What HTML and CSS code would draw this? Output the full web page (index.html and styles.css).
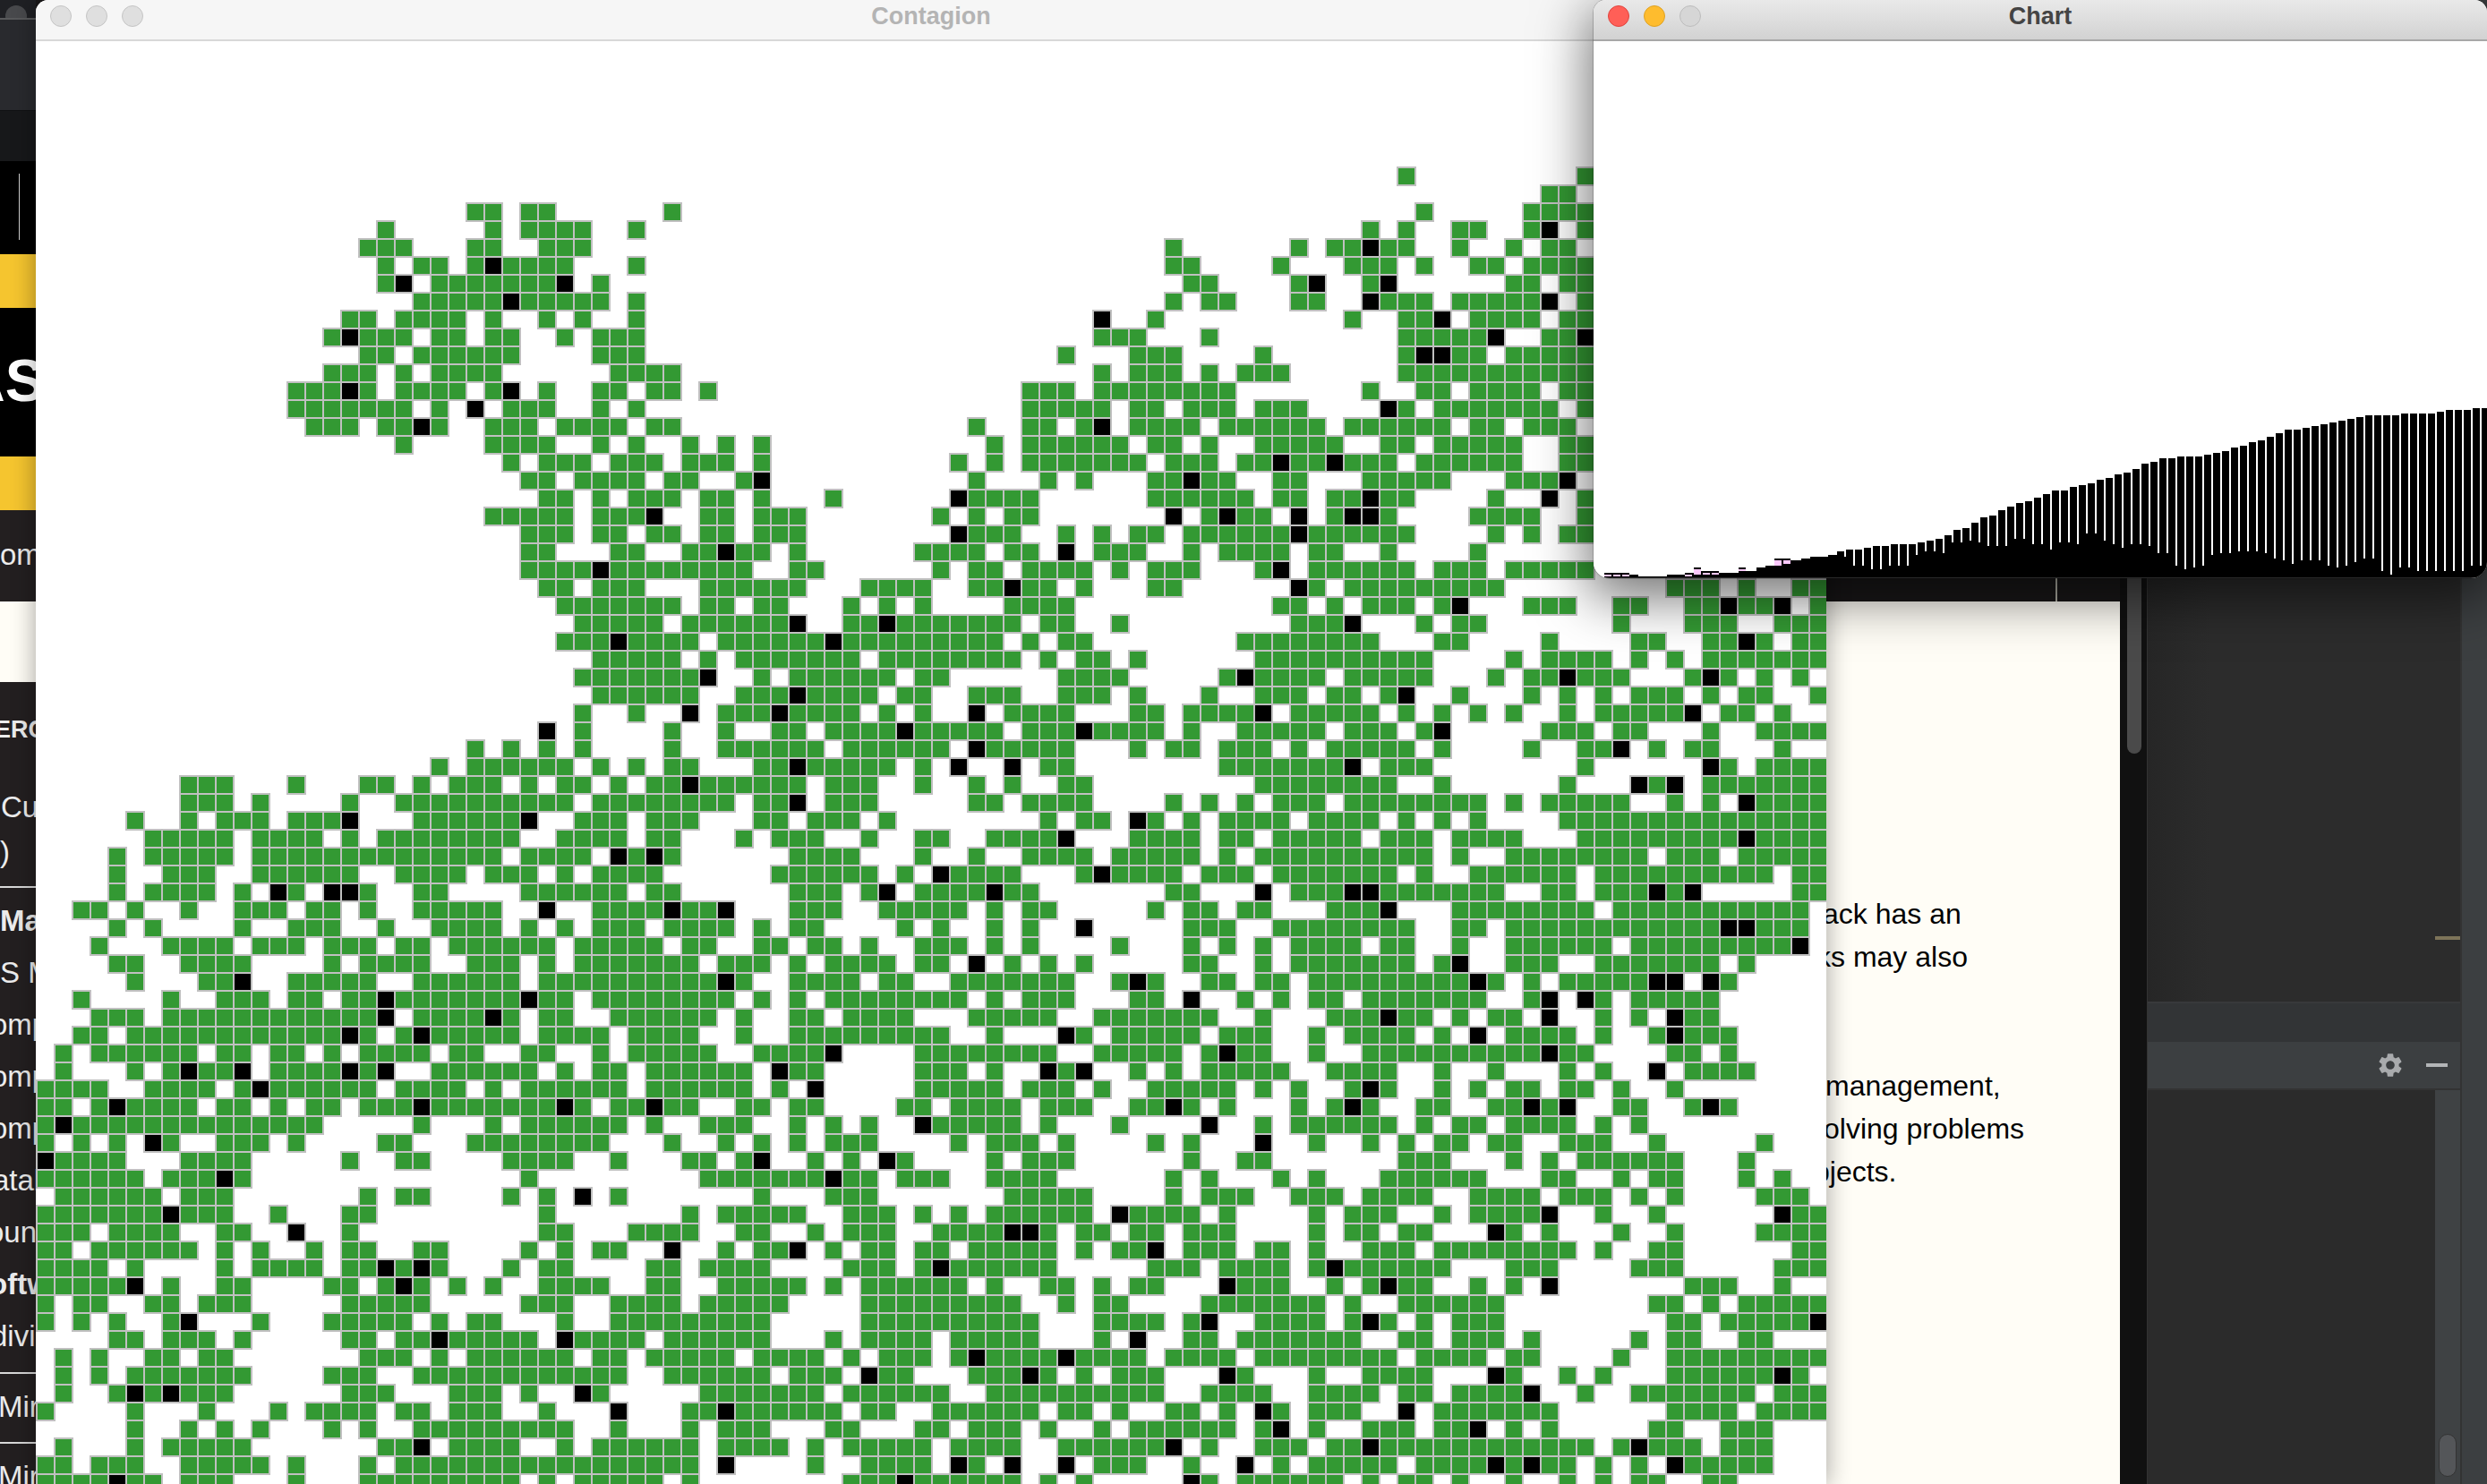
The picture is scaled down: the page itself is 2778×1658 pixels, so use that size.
FILE: index.html
```html
<!DOCTYPE html>
<html lang="en">
<head>
<meta charset="utf-8">
<title>Contagion</title>
<link rel="stylesheet" href="styles.css">
</head>
<body>
<div class="desktop">
  <aside class="strip">
    <div class="s-account"><span class="avatar"></span></div>
    <div class="s-nav"></div>
    <div class="s-sub"></div>
    <div class="s-black"><span class="vbar"></span></div>
    <div class="s-yellow"></div>
    <div class="s-hero"><span class="hero-text">AS</span></div>
    <div class="s-yellow"></div>
    <div class="s-lead"><span class="item">om</span></div>
    <div class="s-cream"></div>
    <div class="s-list">
      <div class="s-heading">ERC</div>
      <div class="s-para">
        <div class="para-line para-c">Cu</div>
        <div class="para-line">)</div>
      </div>
      <hr class="s-rule s-rule-a">
      <div class="s-items">
        <div class="item strong">Ma</div>
        <div class="item">S M</div>
        <div class="item clip-10">omp</div>
        <div class="item clip-10">omp</div>
        <div class="item clip-10">omp</div>
        <div class="item clip-8">atal</div>
        <div class="item clip-14">oun</div>
        <div class="item strong clip-12">oftw</div>
        <div class="item clip-10">divi</div>
      </div>
      <hr class="s-rule s-rule-b">
      <div class="item item-m">Mir</div>
      <hr class="s-rule s-rule-c">
      <div class="item item-m">Mir</div>
    </div>
  </aside>

  <main class="page">
    <div class="band"><span class="band-tick"></span></div>
    <div class="cream">
      <div class="note">
        <p class="line l1">ack has an</p>
        <p class="line l2">ks may also</p>
        <p class="line l3 para-gap">management,</p>
        <p class="line l4">olving problems</p>
        <p class="line l5">bjects.</p>
      </div>
    </div>
  </main>

  <div class="gutter"><span class="gutter-thumb"></span></div>

  <section class="ide">
    <div class="editor"><span class="editor-tick"></span></div>
    <div class="tabs"></div>
    <div class="toolbar">
      <svg class="gear" viewBox="0 0 24 24" width="32" height="32" aria-hidden="true"><path fill="#a9abad" fill-rule="evenodd" d="M19.14 12.94c.04-.3.06-.61.06-.94 0-.32-.02-.64-.07-.94l2.03-1.58a.49.49 0 0 0 .12-.61l-1.92-3.32a.488.488 0 0 0-.59-.22l-2.39.96c-.5-.38-1.03-.7-1.62-.94l-.36-2.54a.484.484 0 0 0-.48-.41h-3.84c-.24 0-.43.17-.47.41l-.36 2.54c-.59.24-1.13.57-1.62.94l-2.39-.96c-.22-.08-.47 0-.59.22L2.74 8.87c-.12.21-.08.47.12.61l2.03 1.58c-.05.3-.09.63-.09.94s.02.64.07.94l-2.03 1.58a.49.49 0 0 0-.12.61l1.92 3.32c.12.22.37.29.59.22l2.39-.96c.5.38 1.03.7 1.62.94l.36 2.54c.05.24.24.41.48.41h3.84c.24 0 .44-.17.47-.41l.36-2.54c.59-.24 1.13-.56 1.62-.94l2.39.96c.22.08.47 0 .59-.22l1.92-3.32c.12-.22.07-.47-.12-.61l-2.01-1.58zM12 15.6c-1.98 0-3.6-1.62-3.6-3.6s1.62-3.6 3.6-3.6 3.6 1.62 3.6 3.6-1.62 3.6-3.6 3.6z"/></svg>
      <span class="minus"></span>
    </div>
    <div class="console">
      <div class="console-body"></div>
      <div class="track"><span class="thumb"></span></div>
    </div>
  </section>
  <div class="rail"></div>

  <section class="window contagion">
    <header class="titlebar titlebar-idle">
      <span class="lights"><i class="dot dot-idle"></i><i class="dot dot-idle"></i><i class="dot dot-idle"></i></span>
      <span class="title title-idle">Contagion</span>
    </header>
    <canvas id="grid" width="2000" height="1612"></canvas>
  </section>

  <section class="window chart">
    <header class="titlebar titlebar-active">
      <span class="lights"><i class="dot dot-red"></i><i class="dot dot-yellow"></i><i class="dot dot-off"></i></span>
      <span class="title title-active">Chart</span>
    </header>
    <canvas id="bars" width="998" height="600"></canvas>
  </section>
</div>
<script src="app.js"></script>
</body>
</html>
```

FILE: styles.css
```css
* { box-sizing: border-box; }
html, body { margin: 0; padding: 0; background: #000; }
body { font-family: "Liberation Sans", Arial, sans-serif; }

.desktop {
  position: relative;
  display: flex;
  width: 2778px;
  height: 1658px;
  overflow: hidden;
}

/* browser page behind the windows, left edge */
.strip { width: 40px; flex: none; display: flex; flex-direction: column; overflow: hidden; background: #231f20; color: #ececec; white-space: nowrap; }
.strip > * { flex: none; }
.s-account { height: 20px; background: #1f2024; overflow: hidden; padding: 6px 0 0 6px; }
.avatar { display: block; width: 24px; height: 24px; border-radius: 50%; background: #48494c; }
.s-nav { height: 104px; background: #292a2e; border-top: 2px solid #58595b; border-bottom: 1px solid #101113; }
.s-sub { height: 56px; background: #17181a; }
.s-black { height: 104px; background: #000; padding: 14px 0 0 21px; }
.vbar { display: block; width: 1px; height: 74px; background: #d0d0d0; }
.s-yellow { height: 60px; background: #f5c52f; }
.s-hero { height: 166px; background: #000; line-height: 162px; overflow: hidden; }
.hero-text { display: block; margin-left: -42px; font-size: 66px; font-weight: 700; color: #fff; }
.s-lead { height: 102px; padding-top: 21px; }
.s-cream { height: 90px; background: #fffdf6; }
.s-heading { margin: 24px 0 0 -6px; height: 58px; line-height: 58px; font-size: 27px; font-weight: 700; }
.s-para { margin-top: 33px; }
.para-line { height: 50px; line-height: 50px; font-size: 33px; }
.para-c { padding-left: 1px; }
.s-rule { display: block; margin: 0; border: 0; height: 2px; background: #d8d8d8; }
.s-rule-a { margin-top: 13px; }
.s-rule-b { margin-top: 11px; }
.s-rule-c { margin-top: 10px; }
.s-items { padding-top: 8px; }
.item { display: block; height: 58px; line-height: 58px; font-size: 33px; }
.item-m { margin: 8px 0 0 -2px; }
.strong { font-weight: 700; }
.clip-8 { margin-left: -8px; }
.clip-10 { margin-left: -10px; }
.clip-12 { margin-left: -12px; }
.clip-14 { margin-left: -14px; }

/* page column that shows right of the Contagion window */
.page { flex: 1; display: flex; flex-direction: column; min-width: 0; }
.band { position: relative; height: 672px; flex: none; background: #1a1819; }
.band-tick { position: absolute; left: 2256px; bottom: 0; width: 2px; height: 30px; background: #b4b3a8; }
.cream { flex: 1; background: #fffdf6; padding: 325px 0 0 1986px; overflow: hidden; }
.note { color: #000; font-size: 32px; line-height: 48px; white-space: nowrap; }
.line { margin: 0; }
.l1 { padding-left: 10px; }
.l2 { padding-left: 3px; }
.l3 { padding-left: 13px; }
.l4 { padding-left: 11px; }
.para-gap { margin-top: 96px; }

.gutter { width: 31px; flex: none; background: #111; padding-left: 8px; border-right: 1px solid #333; }
.gutter-thumb { display: block; width: 16px; height: 842px; background: #4a4a4a; border-radius: 0 0 8px 8px; }

.ide { width: 349px; flex: none; display: flex; flex-direction: column; background: #2b2b2b; }
.editor { position: relative; height: 1119px; flex: none; background: linear-gradient(90deg, #262626, #2c2c2c 20%); }
.editor-tick { position: absolute; top: 1046px; right: 0; width: 28px; height: 4px; background: #7d7459; }
.tabs { height: 45px; flex: none; background: #323436; border-top: 2px solid #38393b; }
.toolbar { height: 52px; flex: none; background: #3c3f41; display: flex; align-items: center; justify-content: flex-end; padding-right: 14px; gap: 24px; }
.gear { display: block; }
.minus { display: block; width: 24px; height: 4px; background: #b3b5b7; }
.console { flex: 1; display: flex; border-top: 2px solid #333; }
.console-body { flex: 1; background: #2b2b2b; }
.track { width: 28px; background: #3f4244; display: flex; align-items: flex-end; justify-content: center; padding-bottom: 8px; }
.thumb { display: block; width: 20px; height: 48px; border-radius: 10px; background: #545659; border: 1px solid #333; }
.rail { width: 30px; flex: none; background: #3c3f41; border-left: 2px solid #333; }

/* desktop windows */
.window { position: absolute; top: 0; display: flex; flex-direction: column; overflow: hidden; background: #fff; }
.contagion { left: 40px; width: 2000px; height: 1658px; border-radius: 14px 14px 0 0; box-shadow: 0 0 26px 2px rgba(0, 0, 0, 0.32); }
.chart { left: 1780px; width: 998px; height: 646px; border-radius: 14px 14px 18px 18px; box-shadow: 0 16px 60px 6px rgba(0, 0, 0, 0.55), 0 0 0 1px rgba(0, 0, 0, 0.18); }
.window canvas { display: block; flex: none; }

.titlebar { position: relative; flex: none; height: 46px; display: flex; align-items: flex-start; justify-content: center; }
.titlebar-idle { background: #f6f6f6; border-bottom: 2px solid #d8d8d8; }
.titlebar-active { background: linear-gradient(#e9e9e9, #d2d2d2); border-bottom: 2px solid #a8a8a8; }
.lights { position: absolute; left: 16px; top: 6px; display: flex; gap: 16px; }
.dot { display: block; width: 24px; height: 24px; border-radius: 50%; border: 1px solid; }
.dot-idle { background: #dfdfdf; border-color: #c4c4c4; }
.dot-red { background: #ff5f57; border-color: #e0443e; }
.dot-yellow { background: #febc2e; border-color: #dea123; }
.dot-off { background: #d6d6d6; border-color: #bcbcbc; }
.title { font-size: 27px; font-weight: 700; line-height: 36px; }
.title-idle { color: #b4b4b4; }
.title-active { color: #444; }
```

FILE: app.js
```js
var GREEN = '#339933', GREY = '#c0c0c0', BLACK = '#000000';

// Cell runs per grid row, starting at row 7: "occupied columns|black columns".
var ROWS = [
"76 86",
"84-85",
"24-25 27-28 35 77 83-86",
"19 25 27-30 33 74 76 79-80 83-84 86|84",
"18-20 24-25 28-30 63 70 72-76 79 82 84-85|74",
"19 21-22 24-29 33 63-64 69 73-75 77 80-81 83-86|25",
"19-20 22-29 31 64-65 70-71 74-75 82-83 85-86|20 29 71 75",
"21-31 33 63 65-66 70-71 74-77 79-84 86|26 74 84",
"17-18 20-23 25 28 30 33 59 62 73 76-78 80-83 85-86|59 78",
"16-20 22-23 25-26 29 31-33 59-61 65 76-81 84-86|17 81 86",
"18-19 21-26 31-33 57 61-63 68 76-80 82-86|77 78",
"16-18 20 22-25 32-35 59 61-63 65 67-69 76-86",
"14-18 20-23 25-26 28 31-32 34-35 37 55-57 59-66 74 77-78 80-83 85-86|17 26",
"14-20 22 24 26-28 31 33 55-59 61-62 64-66 68-70 75-76 78-84 86|24 75",
"15-17 19-22 25-27 29-32 34-35 52 55-56 58-59 61-64 66-71 73-78 80-81 83-85|21 59",
"20 25-28 31 33 36 38 40 53 55-60 62-63 65 68-72 75-76 78-82 85-86",
"26 28-30 32-34 36-38 40 51 53 55-61 63-65 67-75 77-82 85-86|69 72",
"27-28 30-33 35-36 39-40 52 56 58 62-66 69-70 74-78 82-85|40 64 85",
"28-29 31 33-35 37-38 40 44 51-55 62-67 69-70 72-76 81 84 86|51 74 84",
"25-29 31-34 37-38 40-42 50 52 54-55 63 65-68 70 72-75 80-83 86|34 63 66 70 73 74",
"27-29 31-32 34-35 37-38 40-42 51-54 57 59 61-62 64-76 81 83 85-86|51 70",
"27-28 32-33 36-40 42 49-52 54-55 57 59-61 64 66-69 71-72 75 80|38 57",
"27-39 42-43 50 52-53 55-58 60 62-64 68-69 71-76 78-80 82-86|31 69",
"28-29 31-33 37-42 46-49 52-56 58 62-63 70-71 73-81 91-93 95 98-99|54 70",
"29-35 37-38 40-41 45 47 49 54-57 69-70 72 74-76 78-79 83-85 88-89 92-97 99|79 94 97",
"30-34 36-42 45-54 56-57 60 70-73 77 79-80 88 92-94 97-99|42 47 73",
"29-36 38-53 55 57-58 67-74 78-79 84 89-90 93-96 98-99|32 44 95",
"31-35 37 39-45 47-54 56 58-59 61 68-77 82 84-87 89 91 93-99",
"30-37 40 42-47 49-50 57-60 66-71 73-77 81 83-88 92-94 96 98|37 67 85 93",
"31-36 39-46 48-49 52-54 57-59 61 65 68-70 72-73 75-76 79 83 85 87 89-91 93 95-96 99|42 76",
"30 33 36 38-45 47 49 52 54-57 61-62 64-68 70-74 76 78 80 82 85 87-92 94-95 97|36 41 52 68 92",
"28 30 35 38 41-42 44-53 55-62 64 67-71 73-75 77-78 84-86 88-89 93 96-99|28 48 58 78",
"24 26 28 30 35 38-43 45-50 52-57 61 63-64 66-68 70 72-76 78 83 86-88 90 92-93 97|52 88",
"22 24-29 31 33 35-36 40-47 49 51 54 56-57 66-73 75-77 86 93-94 96-99|42 51 54 73 93",
"8-10 14 18-19 21 23-25 27 29-30 32 34-42 44-46 49 52 54 57-58 68-75 78 85 89-91 93-99|36 89 91",
"8-10 12 17 20-29 31-38 40-42 44-46 52-53 55-58 63 65 67 69-71 73-80 82 84-88 91 93 95-99|42 95",
"5 8 10-12 14-17 21-27 30-32 34-36 40-41 43-45 47 56 58-59 61-62 64 66-69 71-74 76 78 80 85-99|17 27 61",
"6-10 12-15 17 19-26 29-32 34-35 39 41-43 46 49-50 53-57 61-64 66-67 69-73 75-77 79-82 86-99|57 95",
"4 6-10 12-25 27-30 32-35 42-45 49 52 55-58 60-64 66 68-77 79 82-89 91-93 95-99|32 34",
"4 7-9 12-17 20-23 25-27 29 31-34 41-46 48 50-54 58-63 65-67 69-75 77 80-85 87-96 98-99|50 59",
"4 6-9 11 13-14 16-18 21-22 27-32 34-35 42-44 46-47 49-55 63-64 68 70-81 84-85 87-92 98-99|13 16 17 47 53 68 73 74 90 92",
"2-3 5 8 11-13 15-16 18 21-25 28 31-38 42-44 47-51 53 55-56 62 64-65 67-68 72-75 79-86 88-98|28 35 38 75",
"4 6 11 14-16 19 22-25 27 29 31-33 35-38 40 42-43 48 50 53 55 58 64-66 69-76 79-80 82-98|58 94 95",
"3 7-10 12-14 16-18 20-21 23-28 30-34 36-37 40-41 43-44 46 49-51 53 55 60 64 66 68 70-73 75-76 79 82-87 89-98|98",
"4-5 8-11 16 18-21 24-26 28 30-36 38-40 42 44-47 49-50 52 54 56 58 64-65 68 70-76 78-79 82-84 87-93 95|52 79",
"5 9-11 14-18 21-26 28-39 42-45 47-48 51-57 60-62 65-66 68-69 71-81 83 85-91 93-94|11 38 61 80 90 91 93",
"2 7 10-12 14-15 17-29 31-38 40 42 44-51 53 55-57 61-62 64 67 69 71-72 74-80 83-84 86-87 89-93|19 27 64 84 86",
"3-5 7-19 21-26 28-29 32-37 39 42-43 45-48 52-56 59-65 68 72-77 79 81-82 84 87 89 91-93|19 25 75 84 91",
"2-3 5-18 20-26 28-31 33-36 39 42-50 53 57-58 60-64 66-68 71 73-76 78 80 82-85 87 90-94|17 21 57 80 91",
"1 3-8 10-11 13-14 16 18-21 23-24 27-28 31 33-37 40-44 49-56 59-63 65-68 71 74-86 91-92 94|44 66 84",
"1 5 7-11 13-19 22-27 29 31-32 34-39 41-43 49-51 53 56-58 61 63 65-69 72-75 78 81 85 87 90 92-95|8 11 17 19 41 56 58 90",
"0-3 6-9 11-18 20-23 25 27-32 34-39 41 43 49-53 55-57 59 62-66 68 70 73-75 78 80 82-83 85-86 88 91|12 43 74",
"0-1 3-8 10-11 13 15-16 18-30 32-36 39-40 42-43 48-49 51-54 56-58 61-64 66 70 72-74 77-78 81-85 88-89 92-94|4 21 29 34 63 73 83 85 93",
"0-15 21 25 27-32 34 37-39 42 44 46 49-54 56 60 65 68 70-75 77 79-80 82-85 87 89|1 49 65",
"0 2 4 6-7 10-12 14 19-20 24-31 35 38 40 42 44-46 51 53-55 57 62 64 68 71 74 76 78-79 81-82 85-87 90 96|6 68",
"0-4 8-11 17 20-21 26-29 32 36-37 39-40 43 45 47-48 53 55-57 64 67-68 76-78 82 84 86-91 95|0 40 47",
"0-5 7-11 27 37-46 48-50 53-56 63 65 69 71 75-80 84-85 88 90-91 95 97|10 44",
"1-6 8-10 18 20-21 26 28 30 32 40 44-46 54-58 63 65-67 70-72 74-77 80-83 85-87 89 91 96-98|30",
"0-10 13 17-18 28 36 38-42 45-47 49 51 53-58 60-64 66 71 73-75 78 80-84 87 90 97-99|7 60 84 97",
"0-2 4-7 10-11 14 17 28-29 33-36 39-40 43 45-47 50-56 58-59 61-62 64-66 71 73-74 76-77 81-82 84 88 91 96-99|14 54 55 81",
"0-1 3-8 10 12 15 17-18 21-22 27 29 31-32 35 38 40-42 44 46-47 49-50 52-56 58 60-62 64-66 68-69 71 74-76 78-85 87 90-91 98-99|35 42 62",
"0-3 5 10 12-15 17-22 26 28-29 34-35 37-40 45-47 49-56 62-64 66-69 71-78 82-84 89-91 97-99|19 21 50 72",
"0-5 7 10-11 16-17 19-21 23 25 28-31 34-35 38-42 44 46-51 53 56-57 59 61-62 66-69 72 74-77 80 82 84 92-94 97|5 20 66 75 84",
"0 2-3 6-7 9-11 17-21 27-29 32-35 37-41 46-54 57 59-60 65-71 73 76-81 90-91 93 95-99",
"0 2 4 7-8 12 16-20 22 24-25 29 32-40 46-55 59-62 64-65 68-71 73-75 77 79-81 91-92 94-99|8 65 74 99",
"4-5 7-9 11 17-18 20-27 29-33 35-40 44 46-49 51-55 59 61 64-65 67-73 76-77 79-81 83 89 91-92 95-96|22 29 61",
"1 3 6-7 9-10 18-20 22 24-29 31-32 34-38 40-43 45 47-49 51-61 63-66 68-75 77-80 82-83 88 91-99|52 57",
"1 3 5-11 16-18 21-32 35-40 42-44 46-48 52-56 58 60-62 66-67 71 74-77 81-82 85 87 91-98|46 55 66 81 97",
"1 4-10 17-19 23-25 27 30-31 37-43 45-50 53-62 65-68 71-74 76-77 79-83 86 89-95 97-99|5 7 30 83",
"0 5 9 13 15-18 20-21 23-25 28 32 36-44 46-47 50-55 57-58 60 63-64 66 68-69 71-73 76 78-84 91-94 96-99|32 38 68 76",
"5 8 10 12 16 18 21-29 32 36 38-40 44-45 49-50 52-54 56 59 61-66 68-69 71 74-76 78-80 82 84 90-91 94-96|69 80",
"1 5 7-11 19-21 23-26 29 31-36 38-41 43 45-49 51-54 57-63 65 68-70 72-86 88-92 94-96|21 63 74 89",
"0-1 3-5 8-12 14 18 20-36 38 43 46-49 51-52 54 57 59-61 64 67 69 71-75 77-85 87 89 91-96|38 51 54 57 67 81 83 91",
"0-6 8-10 14 18-26 28 30-34 36 45-54 56 58 64-65 67-72 74 76-77 79 82 85 87 89-90 93-94|4 48 64"
];
var FIRST_ROW = 7, CELL = 20;

function drawGrid() {
  var ctx = document.getElementById('grid').getContext('2d');
  ctx.fillStyle = '#ffffff';
  ctx.fillRect(0, 0, 2000, 1612);
  var cells = [];
  ROWS.forEach(function (row, i) {
    var parts = row.split('|');
    var blacks = {};
    (parts[1] || '').split(' ').forEach(function (b) { if (b) blacks[b] = true; });
    parts[0].split(' ').forEach(function (run) {
      var ends = run.split('-');
      var from = +ends[0], to = +(ends[1] || ends[0]);
      for (var c = from; c <= to; c++) {
        cells.push({ x: c * CELL, y: (i + FIRST_ROW) * CELL, black: !!blacks[c] });
      }
    });
  });
  ctx.fillStyle = GREY;
  cells.forEach(function (p) { ctx.fillRect(p.x, p.y, CELL + 2, CELL + 2); });
  cells.forEach(function (p) {
    ctx.fillStyle = p.black ? BLACK : GREEN;
    ctx.fillRect(p.x + 2, p.y + 2, CELL - 2, CELL - 2);
  });
}

// Bar tops and white-gap bottoms are page y values; the canvas starts at y=46.
var TOPS = [645,640,640,640,642,644,644,644,642,642,640,634,638,638,640,640,634,638,634,632,
  624,624,626,624,622,622,620,616,614,614,612,610,610,608,608,608,606,604,602,598,
  592,590,584,578,576,570,566,562,560,556,552,548,548,544,542,540,536,534,530,528,
  524,518,516,512,512,510,510,510,508,506,504,500,498,494,492,488,484,480,480,478,
  476,474,472,470,468,466,464,464,464,464,462,462,462,462,460,458,458,458,456,456];
var GAPS = {27:622,28:632,29:632,30:636,31:636,32:632,33:632,34:632,35:620,36:616,37:616,38:618,
  39:606,40:606,41:604,42:606,43:610,44:610,45:610,46:602,47:602,48:608};
[608,614,606,606,608,596,596,604,608,612,608,608,610,618,618,632,636,634,632,620,
 618,618,616,616,616,618,624,626,630,626,626,626,632,634,632,628,624,624,638,642,
 634,634,638,638,638,638,638,638,632,632].forEach(function (y, i) { GAPS[49 + i] = y; });
var PINK = [[1,642,644],[2,642,644],[3,642,644],[10,642,644],[11,636,642],[12,640,642],[13,640,642],
  [16,636,638],[20,626,632],[21,626,630]];

function drawBars() {
  var ctx = document.getElementById('bars').getContext('2d');
  var base = 646 - 46;
  ctx.fillStyle = '#ffffff';
  ctx.fillRect(0, 0, 998, 600);
  ctx.fillStyle = '#000000';
  TOPS.forEach(function (top, k) {
    var x = 2 + 10 * k, y = top - 46;
    ctx.fillRect(x, y, 8, base - y);
    var gap = GAPS[k];
    if (gap === undefined) gap = Math.max(top, TOPS[k + 1] === undefined ? top : TOPS[k + 1]);
    ctx.fillRect(x + 8, gap - 46, 2, base - (gap - 46));
  });
  ctx.fillStyle = '#fcc8fc';
  PINK.forEach(function (p) {
    ctx.fillRect(2 + 10 * p[0], p[1] - 46, 8, p[2] - p[1]);
  });
  ctx.fillStyle = '#2a2a2a';
  ctx.fillRect(0, base - 1, 998, 1);
}

drawGrid();
drawBars();
```
